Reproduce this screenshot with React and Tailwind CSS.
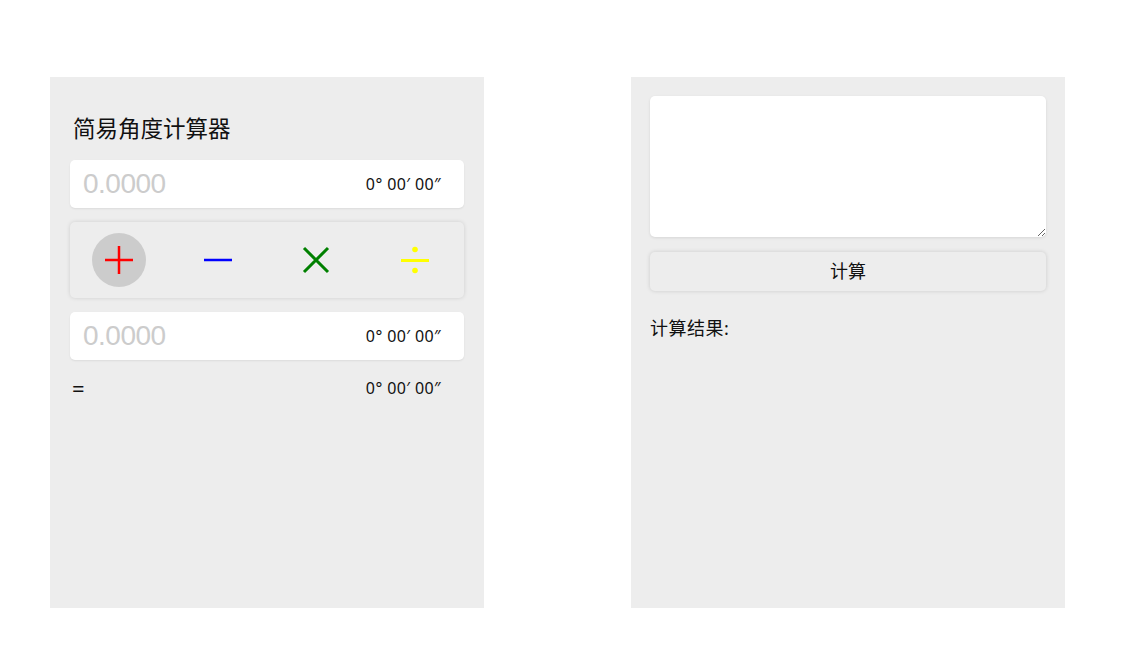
import React from "react";

const FONT = "font-['Noto_Sans','Noto_Sans_CJK_SC',sans-serif]";

const DMS = () => <span className="text-[16px] leading-6 tracking-[0.4px] text-[#111]">0° 00′ 00″</span>;

const AngleInput = () => (
  <div className="flex h-12 items-center justify-between rounded-[5px] bg-white pl-[13px] pr-[23px] shadow-[0_1px_2px_rgba(0,0,0,0.08)]">
    <input
      placeholder="0.0000"
      className="w-40 bg-transparent font-['Liberation_Sans',Arial,sans-serif] text-[28px] tracking-[-0.5px] outline-none placeholder:text-[#cccccc]"
    />
    <DMS />
  </div>
);

const Plus = () => (
  <svg width="30" height="30" viewBox="0 0 30 30">
    <path d="M15 1v28M1 15h28" stroke="#ff0000" strokeWidth="2.5" />
  </svg>
);

const Minus = () => (
  <svg width="30" height="30" viewBox="0 0 30 30">
    <path d="M1 15h28" stroke="#0000ff" strokeWidth="2.5" />
  </svg>
);

const Times = () => (
  <svg width="30" height="30" viewBox="0 0 30 30">
    <path d="M3 3l24 24M27 3L3 27" stroke="#008000" strokeWidth="3" />
  </svg>
);

const Divide = () => (
  <svg width="30" height="30" viewBox="0 0 30 30">
    <circle cx="15" cy="4.5" r="2.8" fill="#ffff00" />
    <path d="M1 15.5h28" stroke="#ffff00" strokeWidth="3" />
    <circle cx="15" cy="25.5" r="2.8" fill="#ffff00" />
  </svg>
);

const OPS = [
  { id: "add", Icon: Plus, active: true },
  { id: "sub", Icon: Minus },
  { id: "mul", Icon: Times },
  { id: "div", Icon: Divide },
];

export default function App() {
  return (
    <div className={`${FONT} min-h-screen bg-white`}>
      <div className="flex gap-[147px] pl-[50px] pt-[77px]">
        <section className="h-[531px] w-[434px] bg-[#ededed] px-5 pt-5">
          <h1 className="mt-4 pl-[3px] text-[22.5px] font-normal leading-8 text-[#111]">简易角度计算器</h1>
          <div className="mt-[15px]">
            <AngleInput />
          </div>
          <div className="mt-[14px] grid h-[76px] grid-cols-4 items-center rounded-[5px] bg-[#ededed] shadow-[0_0_4px_rgba(0,0,0,0.13)]">
            {OPS.map(({ id, Icon, active }) => (
              <div key={id} className="flex justify-center">
                <button
                  className={`flex h-[54px] w-[54px] items-center justify-center rounded-full ${
                    active ? "bg-[#cccccc]" : "bg-transparent"
                  }`}
                >
                  <Icon />
                </button>
              </div>
            ))}
          </div>
          <div className="mt-[14px]">
            <AngleInput />
          </div>
          <div className="mt-4 flex items-center justify-between pl-[2px] pr-[23px]">
            <span className="text-[22px] leading-6 text-[#111]">=</span>
            <DMS />
          </div>
        </section>

        <section className="h-[531px] w-[434px] bg-[#ededed] p-[19px]">
          <textarea className="block h-[141px] w-full rounded-[5px] bg-white p-2 text-[16px] shadow-[0_1px_3px_rgba(0,0,0,0.1)] outline-none" />
          <button className="mt-[15px] flex h-[39px] w-full items-center justify-center rounded-[5px] bg-[#ededed] text-[18px] text-[#111] shadow-[0_0_4px_rgba(0,0,0,0.15)]">
            计算
          </button>
          <p className="mt-6 text-[18px] leading-[27px] tracking-[0.5px] text-[#111]">计算结果:</p>
        </section>
      </div>
    </div>
  );
}
